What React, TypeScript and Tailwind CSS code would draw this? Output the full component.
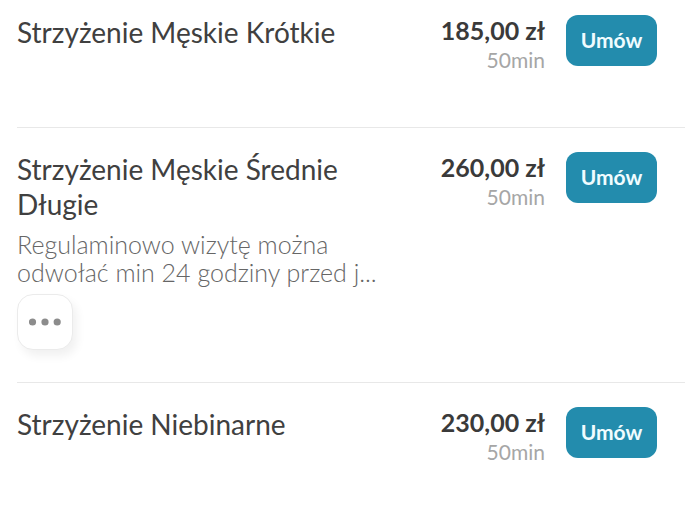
interface Service {
    id: number;
    name: string;
    price: string;
    duration: string;
    description?: string;
}

const services: Service[] = [
    { id: 1, name: "Strzyżenie Męskie Krótkie", price: "185,00 zł", duration: "50min" },
    {
        id: 2,
        name: "Strzyżenie Męskie Średnie Długie",
        price: "260,00 zł",
        duration: "50min",
        description: "Regulaminowo wizytę można odwołać min 24 godziny przed j...",
    },
    { id: 3, name: "Strzyżenie Niebinarne", price: "230,00 zł", duration: "50min" },
];

function ServiceRow({ service }: { service: Service }) {
    return (
        <li className="flex items-start min-h-32 border-b border-[#e8e8e8] last:border-b-0 pt-6 pb-8 first:pt-[15px]">
            <div className="flex-1 min-w-0 pr-1">
                <h3 className="text-[28px] leading-[35px] text-[#404040]">{service.name}</h3>
                {service.description && (
                    <>
                        <p className="mt-2 text-[25px] leading-7 font-light text-[#666666]">{service.description}</p>
                        <button
                            type="button"
                            aria-label="Więcej"
                            className="mt-2 flex items-center justify-center w-14 h-14 bg-white border border-[#ebebeb] rounded-2xl shadow-[4px_6px_10px_rgba(0,0,0,0.06)]"
                        >
                            <svg width="32" height="8" viewBox="0 0 32 8" fill="#8c8c8c">
                                <circle cx="3.5" cy="4" r="3.6" />
                                <circle cx="16" cy="4" r="3.6" />
                                <circle cx="28.2" cy="4" r="3.6" />
                            </svg>
                        </button>
                    </>
                )}
            </div>
            <div className="w-36 shrink-0 text-right">
                <p className="text-[25px] leading-[30px] font-bold text-[#3a3a3a]">{service.price}</p>
                <p className="text-[21px] leading-[30px] text-[#a6a6a6]">{service.duration}</p>
            </div>
            <button
                type="button"
                className="ml-[21px] mr-7 shrink-0 w-[91px] h-[51px] pb-0.5 rounded-xl bg-[#238cad] text-[#f0fcff] text-[21px] leading-6 font-bold"
            >
                Umów
            </button>
        </li>
    );
}

export default function App() {
    return (
        <main className="bg-white font-['Lato',sans-serif]">
            <ul className="pl-[17px] pr-[14px]">
                {services.map((service) => (
                    <ServiceRow key={service.id} service={service} />
                ))}
            </ul>
        </main>
    );
}
